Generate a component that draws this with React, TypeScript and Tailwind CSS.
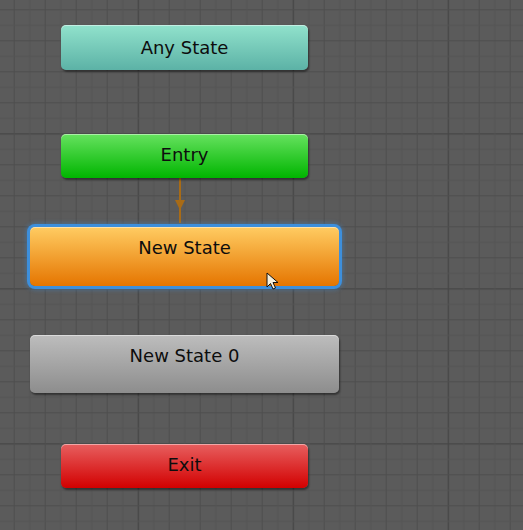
import React from "react";

type Node = {
  label: string;
  left: string;
  top: string;
  size: string;
  fill: string;
  selected?: boolean;
};

const nodes: Node[] = [
  { label: "Any State", left: "left-[61px]", top: "top-[25px]", size: "w-[247px] h-[45px] pt-[12px]", fill: "bg-[linear-gradient(#91e2cc,#5cb2a6)]" },
  { label: "Entry", left: "left-[61px]", top: "top-[134px]", size: "w-[247px] h-[44px] pt-[10px]", fill: "bg-[linear-gradient(#66e25f,#00b500)]" },
  { label: "New State", left: "left-[30px]", top: "top-[227px]", size: "w-[309px] h-[59px] pt-[10px]", fill: "bg-[linear-gradient(#ffcc62,#e57500)]", selected: true },
  { label: "New State 0", left: "left-[30px]", top: "top-[335px]", size: "w-[309px] h-[58px] pt-[10px]", fill: "bg-[linear-gradient(#bdbdbd,#8d8d8d)]" },
  { label: "Exit", left: "left-[61px]", top: "top-[444px]", size: "w-[247px] h-[44px] pt-[10px]", fill: "bg-[linear-gradient(#e85f5f,#d20000)]" },
];

function Grid() {
  const lines = Array.from({ length: 10 }, (_, i) => i * 15.5);
  const stroke = (i: number) => (i === 0 ? "#454545" : i % 2 === 0 ? "#4e4e4e" : "#535353");
  return (
    <svg className="absolute inset-0" width={523} height={530}>
      <defs>
        <pattern id="grid" x={137.7} y={133.3} width={155} height={155} patternUnits="userSpaceOnUse">
          {lines.map((p, i) => (
            <React.Fragment key={i}>
              <line x1={p + 0.5} y1={0} x2={p + 0.5} y2={155} stroke={stroke(i)} strokeWidth={i === 0 ? 1.5 : 1} />
              <line x1={0} y1={p + 0.5} x2={155} y2={p + 0.5} stroke={stroke(i)} strokeWidth={i === 0 ? 1.5 : 1} />
            </React.Fragment>
          ))}
        </pattern>
      </defs>
      <rect width={523} height={530} fill="url(#grid)" />
    </svg>
  );
}

export default function App() {
  return (
    <div className="relative w-[523px] h-[530px] overflow-hidden bg-[#5b5b5b] font-['DejaVu_Sans',sans-serif]">
      <Grid />

      {/* transition Entry -> New State */}
      <svg className="absolute left-[170px] top-[178px]" width={20} height={48}>
        <line x1={10} y1={0} x2={10} y2={45} stroke="#a86b16" strokeWidth={2} />
        <polygon points="5,22 15,22 10,32" fill="#a86b16" />
      </svg>

      {nodes.map((n) => (
        <div
          key={n.label}
          className={`absolute ${n.left} ${n.top} ${n.size} ${n.fill} rounded-[5px] flex justify-center text-[18px] leading-[21px] text-[#0d0d0d] ${
            n.selected
              ? "shadow-[inset_0_1px_0_rgba(255,255,255,0.45),0_0_0_3px_#3d8fdc,0_0_4px_4px_rgba(61,143,220,0.4)]"
              : "shadow-[inset_0_1px_0_rgba(255,255,255,0.45),1px_2px_2px_rgba(0,0,0,0.45)]"
          }`}
        >
          {n.label}
        </div>
      ))}

      {/* mouse pointer */}
      <svg className="absolute left-[266px] top-[272px]" width={14} height={20}>
        <path d="M1 1 L1 15 L4.5 11.5 L7 17 L9.5 16 L7 10.5 L12 10.5 Z" fill="#f4efdc" stroke="#111" strokeWidth={1} strokeLinejoin="round" />
      </svg>
    </div>
  );
}
